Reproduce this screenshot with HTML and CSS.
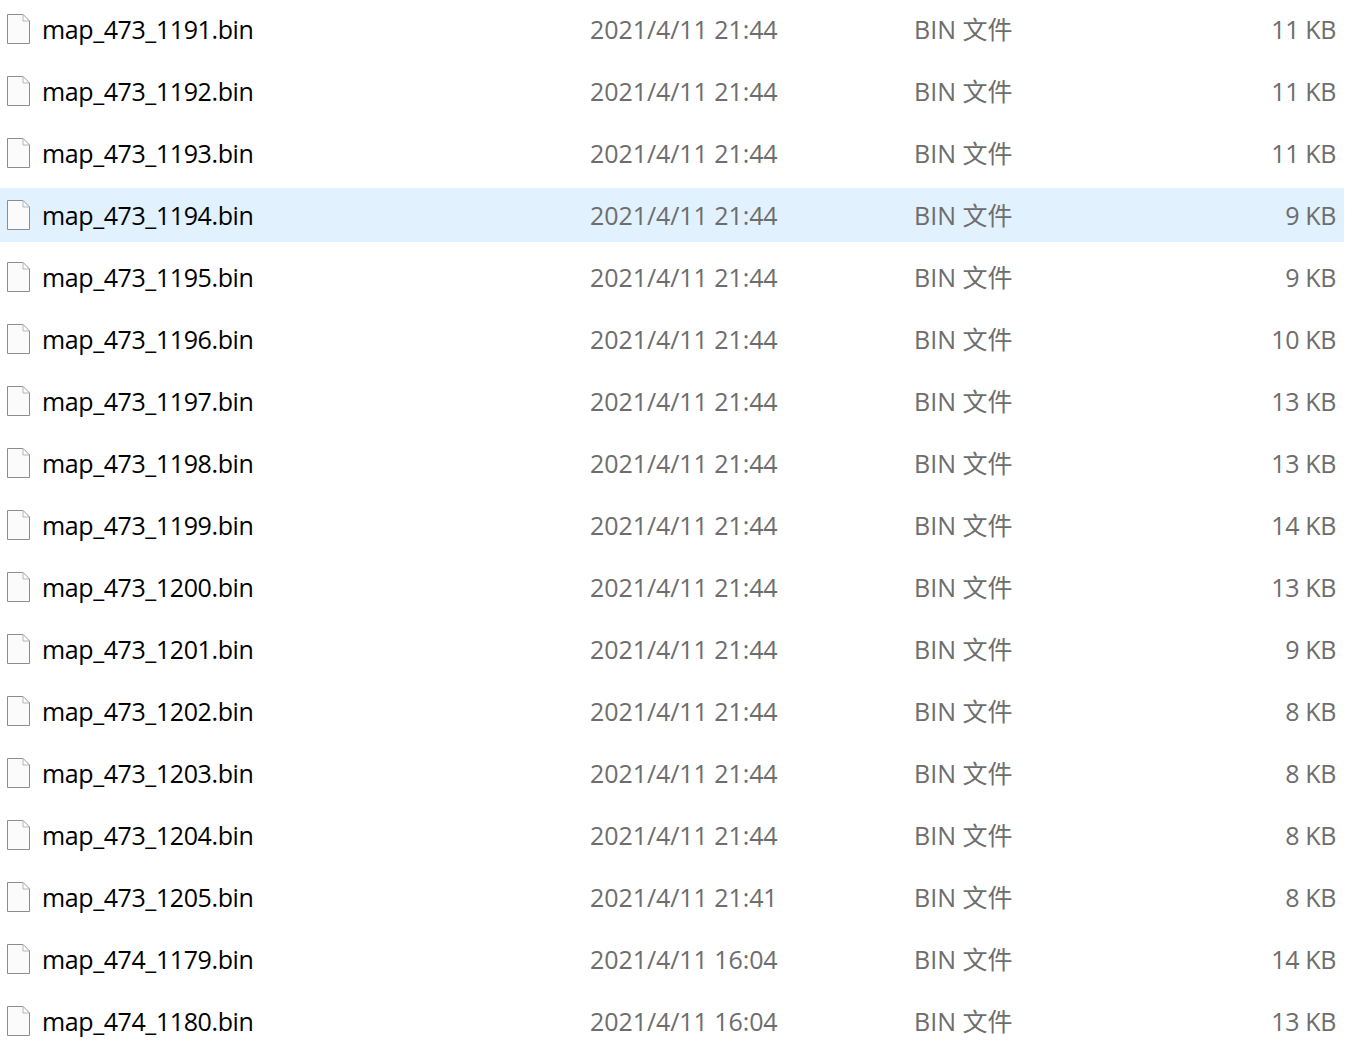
FILE: index.html
```html
<!DOCTYPE html>
<html lang="zh">
<head>
<meta charset="utf-8">
<title>Files</title>
<link rel="stylesheet" href="styles.css">
</head>
<body>
<svg class="defs" width="0" height="0" aria-hidden="true"><symbol id="file" viewBox="0 0 23 30"><path d="M.5.5H16L22.5 7V29.5H.5Z" fill="#fbfbfb" stroke="#8c8c8c"/><path d="M16 .5V7H22.5Z" fill="#fff" stroke="#b5b5b5"/></symbol></svg>
<main class="list">
<div class="row"><svg class="icon"><use href="#file"/></svg><span class="name">map_473_1191.bin</span><span class="date">2021/4/11 21:44</span><span class="type">BIN 文件</span><span class="size">11 KB</span></div>
<div class="row"><svg class="icon"><use href="#file"/></svg><span class="name">map_473_1192.bin</span><span class="date">2021/4/11 21:44</span><span class="type">BIN 文件</span><span class="size">11 KB</span></div>
<div class="row"><svg class="icon"><use href="#file"/></svg><span class="name">map_473_1193.bin</span><span class="date">2021/4/11 21:44</span><span class="type">BIN 文件</span><span class="size">11 KB</span></div>
<div class="row selected"><svg class="icon"><use href="#file"/></svg><span class="name">map_473_1194.bin</span><span class="date">2021/4/11 21:44</span><span class="type">BIN 文件</span><span class="size">9 KB</span></div>
<div class="row"><svg class="icon"><use href="#file"/></svg><span class="name">map_473_1195.bin</span><span class="date">2021/4/11 21:44</span><span class="type">BIN 文件</span><span class="size">9 KB</span></div>
<div class="row"><svg class="icon"><use href="#file"/></svg><span class="name">map_473_1196.bin</span><span class="date">2021/4/11 21:44</span><span class="type">BIN 文件</span><span class="size">10 KB</span></div>
<div class="row"><svg class="icon"><use href="#file"/></svg><span class="name">map_473_1197.bin</span><span class="date">2021/4/11 21:44</span><span class="type">BIN 文件</span><span class="size">13 KB</span></div>
<div class="row"><svg class="icon"><use href="#file"/></svg><span class="name">map_473_1198.bin</span><span class="date">2021/4/11 21:44</span><span class="type">BIN 文件</span><span class="size">13 KB</span></div>
<div class="row"><svg class="icon"><use href="#file"/></svg><span class="name">map_473_1199.bin</span><span class="date">2021/4/11 21:44</span><span class="type">BIN 文件</span><span class="size">14 KB</span></div>
<div class="row"><svg class="icon"><use href="#file"/></svg><span class="name">map_473_1200.bin</span><span class="date">2021/4/11 21:44</span><span class="type">BIN 文件</span><span class="size">13 KB</span></div>
<div class="row"><svg class="icon"><use href="#file"/></svg><span class="name">map_473_1201.bin</span><span class="date">2021/4/11 21:44</span><span class="type">BIN 文件</span><span class="size">9 KB</span></div>
<div class="row"><svg class="icon"><use href="#file"/></svg><span class="name">map_473_1202.bin</span><span class="date">2021/4/11 21:44</span><span class="type">BIN 文件</span><span class="size">8 KB</span></div>
<div class="row"><svg class="icon"><use href="#file"/></svg><span class="name">map_473_1203.bin</span><span class="date">2021/4/11 21:44</span><span class="type">BIN 文件</span><span class="size">8 KB</span></div>
<div class="row"><svg class="icon"><use href="#file"/></svg><span class="name">map_473_1204.bin</span><span class="date">2021/4/11 21:44</span><span class="type">BIN 文件</span><span class="size">8 KB</span></div>
<div class="row"><svg class="icon"><use href="#file"/></svg><span class="name">map_473_1205.bin</span><span class="date">2021/4/11 21:41</span><span class="type">BIN 文件</span><span class="size">8 KB</span></div>
<div class="row"><svg class="icon"><use href="#file"/></svg><span class="name">map_474_1179.bin</span><span class="date">2021/4/11 16:04</span><span class="type">BIN 文件</span><span class="size">14 KB</span></div>
<div class="row"><svg class="icon"><use href="#file"/></svg><span class="name">map_474_1180.bin</span><span class="date">2021/4/11 16:04</span><span class="type">BIN 文件</span><span class="size">13 KB</span></div>
</main>
</body>
</html>
```
FILE: styles.css
```css
html, body {
  margin: 0;
  padding: 0;
  background: #fff;
  overflow: hidden;
  height: 1051px;
}
.defs {
  position: absolute;
}
.list {
  width: 1344px;
  padding-top: 2px;
  display: flex;
  flex-direction: column;
  gap: 8px;
  font-family: "Open Sans", "Noto Sans CJK SC", sans-serif;
  font-size: 25px;
  line-height: 34px;
  color: #6d6d6d;
}
.row {
  height: 54px;
  display: grid;
  grid-template-columns: 35px 548px 324px 1fr auto;
  align-items: center;
  padding-left: 7px;
  padding-right: 8px;
  box-sizing: border-box;
}
.selected {
  background: #e1f1fe;
}
.icon {
  width: 23px;
  height: 30px;
}
.name {
  color: #000;
  letter-spacing: -0.4px;
}
.date {
  letter-spacing: -0.07px;
}
.size {
  letter-spacing: -0.35px;
}
```
